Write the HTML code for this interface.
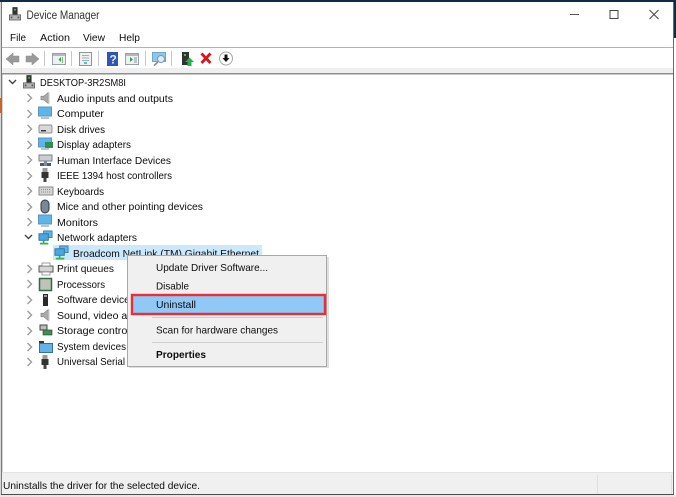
<!DOCTYPE html>
<html><head><meta charset="utf-8"><style>
html,body{margin:0;padding:0;background:#fff;width:676px;height:497px;overflow:hidden}
svg{display:block;position:absolute;left:0;top:0;filter:blur(.3px)}
text{font-family:"Liberation Sans",sans-serif;font-size:10.5px;fill:#0c0c0c}
</style></head><body>
<svg width="676" height="497" viewBox="0 0 676 497" xmlns="http://www.w3.org/2000/svg">
<defs>
<symbol id="chev" viewBox="0 0 8 10" overflow="visible"><path d="M1.500 1l4 4-4 4" fill="none" stroke="#a0a0a0" stroke-width="1.500"/></symbol>
<symbol id="mon" viewBox="0 0 14 14" overflow="visible"><rect x="0.5" y="1" width="13" height="9" fill="#5fb4e8" stroke="#5a94bf"/><rect x="3" y="11" width="8" height="2" fill="#b9c4cc"/></symbol>
<symbol id="net" viewBox="0 0 16 16" overflow="visible"><rect x="6" y="1" width="9" height="7" fill="#5fb4e8" stroke="#3f7fae"/><rect x="1" y="4" width="10" height="7" fill="#4ba6e2" stroke="#2f77a8"/><path d="M6 11v3M2 14.500h9" stroke="#36b24a" stroke-width="1.800"/></symbol>
<symbol id="usb" viewBox="0 0 12 14" overflow="visible"><rect x="3.500" y="0" width="5" height="4" fill="#999"/><rect x="2.500" y="4" width="7" height="6" fill="#333"/><rect x="4.500" y="10" width="3" height="4" fill="#444"/></symbol>
<symbol id="spk" viewBox="0 0 12 14" overflow="visible"><path d="M1 5h3l5-4v12l-5-4H1z" fill="#a9a9a9" stroke="#808080" stroke-width=".6"/><path d="M9 1v12h1.500V1z" fill="#d0d0d0"/></symbol>
<symbol id="host" viewBox="0 0 14 16" overflow="visible"><rect x="4" y="0" width="6" height="9" fill="#333"/><rect x="6" y="2" width="2" height="2" fill="#2ecc55"/><rect x="0.500" y="9" width="13" height="6" fill="#b5b5b5" stroke="#666"/><rect x="2" y="11" width="2" height="2" fill="#555"/><rect x="10" y="11" width="2" height="2" fill="#555"/></symbol>
</defs>

<!-- outer background -->
<rect width="676" height="497" fill="#fff"/>
<rect width="676" height="2" fill="#0f2b48"/>
<rect x="674" y="0" width="2" height="38" fill="#0f2b48"/>
<rect x="0" y="2" width="1" height="495" fill="#d8d8d8"/>
<rect x="0" y="98" width="1" height="15" fill="#c8642c"/>
<rect x="0" y="495" width="676" height="2" fill="#e8e8e8"/>
<rect x="1" y="2" width="1" height="493" fill="#7a7a7a"/>
<rect x="2" y="2" width="671" height="492" fill="#fff"/>
<rect x="673" y="2" width="1" height="493" fill="#6a6a6a"/>
<rect x="1" y="494" width="673" height="1" fill="#4d4d4d"/>

<!-- title bar -->
<use href="#host" x="9" y="7" width="12" height="14"/>
<text x="26.500" y="19" style="font-size:11.500px;fill:#333" textLength="73" lengthAdjust="spacingAndGlyphs">Device Manager</text>
<rect x="570" y="14" width="9" height="1" fill="#555"/>
<rect x="610" y="10.500" width="8" height="8" fill="none" stroke="#444"/>
<path d="M649.500 10l9 9M658.500 10l-9 9" stroke="#444" stroke-width="1" fill="none"/>

<!-- menu bar -->
<text x="10" y="41" textLength="16" lengthAdjust="spacingAndGlyphs">File</text>
<text x="40" y="41" textLength="30" lengthAdjust="spacingAndGlyphs">Action</text>
<text x="83" y="41" textLength="22" lengthAdjust="spacingAndGlyphs">View</text>
<text x="119" y="41" textLength="21" lengthAdjust="spacingAndGlyphs">Help</text>
<rect x="2" y="47" width="671" height="1" fill="#b0b3ba"/>

<!-- toolbar -->
<path d="M6 59l7-6v3h6v6h-6v3z" fill="#9a9a9a" stroke="#8a8a8a" stroke-width=".5"/>
<path d="M39 59l-7-6v3h-6v6h6v3z" fill="#9a9a9a" stroke="#8a8a8a" stroke-width=".5"/>
<rect x="44" y="51" width="1" height="15" fill="#c8c8c8"/>
<rect x="52.500" y="53.500" width="13" height="11" fill="#eef1f3" stroke="#9aa0a6"/><rect x="53" y="54" width="12" height="2" fill="#b4b8bd"/><path d="M61 57l-2.500 2.500 2.500 2.500z" fill="#33a34c"/><rect x="62" y="57" width="1" height="6" fill="#7dbf8b"/>
<rect x="71" y="51" width="1" height="15" fill="#c8c8c8"/>
<rect x="79.500" y="52.500" width="12" height="13" fill="#eef1f3" stroke="#8f9499"/><path d="M82 55.500h7M82 58h7M82 60.500h7" stroke="#a8acb0" stroke-width="1"/><rect x="84" y="62" width="3" height="2" fill="#5fb4e8"/>
<rect x="98" y="51" width="1" height="15" fill="#c8c8c8"/>
<rect x="107" y="52" width="11" height="14" fill="#2f55b5"/>
<text x="109.500" y="63.500" style="font-size:12px;font-weight:bold;fill:#e8eeff">?</text>
<rect x="125.500" y="53.500" width="13" height="11" fill="#eef1f3" stroke="#9aa0a6"/><rect x="126" y="54" width="12" height="2" fill="#b4b8bd"/><path d="M130 57l3 2.500-3 2.500z" fill="#33a34c"/><rect x="134" y="57" width="3" height="6" fill="#b9c4cc"/>
<rect x="145" y="51" width="1" height="15" fill="#c8c8c8"/>
<rect x="152.500" y="52.500" width="13" height="9" fill="#8cc8ee" stroke="#6fa7cc"/><circle cx="161" cy="59" r="3.500" fill="#dbeefa" stroke="#7a9ab0"/><path d="M158 62l-4 3.500" stroke="#8b8b8b" stroke-width="1.500"/>
<rect x="171" y="51" width="1" height="15" fill="#c8c8c8"/>
<rect x="182" y="52" width="7" height="13" fill="#333"/><rect x="184" y="54" width="2" height="2" fill="#2ecc55"/><path d="M189.500 57.500l4.500 4.500h-2.500v4h-4v-4H185z" fill="#22b14c"/>
<path d="M201.500 53.500l9 9.500M210.500 53.500l-9 9.500" stroke="#d9141c" stroke-width="2.800" fill="none"/>
<circle cx="226" cy="58.500" r="6.500" fill="#fff" stroke="#a8a8a8"/><path d="M224.500 54.500h3v3.500h2l-3.500 4-3.500-4h2z" fill="#111"/>

<!-- band -->
<rect x="2" y="68" width="671" height="5" fill="#efefef"/>
<rect x="2" y="73" width="671" height="1.500" fill="#8f8f8f"/>
<rect x="2" y="74.500" width="1" height="398" fill="#d4d4d4"/>

<!-- tree -->
<path d="M9 80l3.500 3.500L16 80" fill="none" stroke="#444" stroke-width="1.400"/>
<use href="#host" x="23" y="75" width="12" height="14"/>
<text x="40" y="86" textLength="86" lengthAdjust="spacingAndGlyphs">DESKTOP-3R2SM8I</text>

<use href="#chev" x="26" y="93" width="8" height="10"/><use href="#spk" x="40" y="91" width="11" height="14"/>
<text x="57" y="102" textLength="116" lengthAdjust="spacingAndGlyphs">Audio inputs and outputs</text>

<use href="#chev" x="26" y="109" width="8" height="10"/><use href="#mon" x="38" y="106" width="14" height="14"/>
<text x="57" y="117" textLength="47" lengthAdjust="spacingAndGlyphs">Computer</text>

<use href="#chev" x="26" y="124" width="8" height="10"/><rect x="39" y="125" width="13" height="8" rx="1.500" fill="#d8d8d8" stroke="#8f8f8f"/><rect x="41" y="130" width="5" height="1.500" fill="#3a3a3a"/>
<text x="57" y="133" textLength="48" lengthAdjust="spacingAndGlyphs">Disk drives</text>

<use href="#chev" x="26" y="140" width="8" height="10"/><use href="#mon" x="38" y="137" width="14" height="14"/><rect x="45" y="142" width="8" height="6" fill="#2f8f4f"/>
<text x="57" y="148" textLength="74" lengthAdjust="spacingAndGlyphs">Display adapters</text>

<use href="#chev" x="26" y="155" width="8" height="10"/><rect x="39" y="155" width="13" height="6" fill="#c9ced3" stroke="#7d8288"/><path d="M40 166v-3h4v3zM47 166v-3h4v3z" fill="#4d5a66"/><rect x="44" y="161" width="3" height="5" fill="#7a8ea0"/>
<text x="57" y="164" textLength="114" lengthAdjust="spacingAndGlyphs">Human Interface Devices</text>

<use href="#chev" x="26" y="171" width="8" height="10"/><use href="#usb" x="39" y="168" width="12" height="14"/>
<text x="57" y="179" textLength="115" lengthAdjust="spacingAndGlyphs">IEEE 1394 host controllers</text>

<use href="#chev" x="26" y="186" width="8" height="10"/><rect x="39" y="187" width="14" height="8" fill="#d4d4d4" stroke="#8b8b8b"/><path d="M41 189.500h10M41 192h10" stroke="#8f8f8f" stroke-dasharray="1 1"/>
<text x="57" y="195" textLength="47" lengthAdjust="spacingAndGlyphs">Keyboards</text>

<use href="#chev" x="26" y="202" width="8" height="10"/><rect x="41" y="200" width="8" height="13" rx="4" fill="#7a8794" stroke="#2f3a44"/>
<text x="57" y="210" textLength="146" lengthAdjust="spacingAndGlyphs">Mice and other pointing devices</text>

<use href="#chev" x="26" y="217" width="8" height="10"/><use href="#mon" x="38" y="214" width="14" height="14"/>
<text x="57" y="226" textLength="41" lengthAdjust="spacingAndGlyphs">Monitors</text>

<path d="M25 235l3.500 3.500L32 235" fill="none" stroke="#444" stroke-width="1.400"/><use href="#net" x="38" y="230" width="15" height="15"/>
<text x="57" y="241" textLength="80" lengthAdjust="spacingAndGlyphs">Network adapters</text>

<rect x="53" y="245" width="209" height="15" fill="#cce8fb"/>
<use href="#net" x="54" y="245" width="15" height="15"/>
<text x="73" y="257" textLength="186" lengthAdjust="spacingAndGlyphs">Broadcom NetLink (TM) Gigabit Ethernet</text>

<use href="#chev" x="26" y="264" width="8" height="10"/><rect x="39" y="266" width="14" height="6" fill="#d5d5d5" stroke="#555"/><rect x="42" y="263" width="8" height="3" fill="#fff" stroke="#777" stroke-width=".7"/><rect x="42" y="272" width="8" height="3" fill="#fff" stroke="#777" stroke-width=".7"/>
<text x="57" y="272" textLength="57" lengthAdjust="spacingAndGlyphs">Print queues</text>

<use href="#chev" x="26" y="279" width="8" height="10"/><rect x="39.500" y="278.500" width="12" height="12" fill="#c0c4b8" stroke="#2f6a45" stroke-width="1.500"/>
<text x="57" y="288" textLength="48" lengthAdjust="spacingAndGlyphs">Processors</text>

<use href="#chev" x="26" y="295" width="8" height="10"/><rect x="43" y="294" width="5" height="12" fill="#2a2a2a"/><rect x="44" y="295" width="3" height="2" fill="#999"/>
<text x="57" y="303" textLength="78" lengthAdjust="spacingAndGlyphs">Software devices</text>

<use href="#chev" x="26" y="310" width="8" height="10"/><use href="#spk" x="40" y="308" width="11" height="14"/>
<text x="57" y="319" textLength="82" lengthAdjust="spacingAndGlyphs">Sound, video and</text>

<use href="#chev" x="26" y="326" width="8" height="10"/><rect x="40" y="325" width="7" height="5" fill="#bbb" stroke="#444"/><rect x="43" y="330" width="9" height="5" fill="#3c9150" stroke="#333" stroke-width=".6"/>
<text x="57" y="334" textLength="90" lengthAdjust="spacingAndGlyphs">Storage controllers</text>

<use href="#chev" x="26" y="342" width="8" height="10"/><rect x="39" y="341" width="5" height="3" fill="#333"/><rect x="39.500" y="343.500" width="13" height="9" fill="#5fb4e8" stroke="#3b6f95"/>
<text x="57" y="350" textLength="69" lengthAdjust="spacingAndGlyphs">System devices</text>

<use href="#chev" x="26" y="357" width="8" height="10"/><use href="#usb" x="39" y="355" width="12" height="14"/>
<text x="57" y="365" textLength="68" lengthAdjust="spacingAndGlyphs">Universal Serial</text>

<!-- context menu -->
<rect x="129" y="257" width="200" height="111" fill="#000" opacity=".12"/>
<rect x="127.500" y="255.500" width="199" height="111" fill="#f0f0f0" stroke="#a8a8a8"/>
<text x="156" y="271" textLength="112" lengthAdjust="spacingAndGlyphs">Update Driver Software...</text>
<text x="156" y="289.500" textLength="33" lengthAdjust="spacingAndGlyphs">Disable</text>
<rect x="133" y="296" width="191" height="17" fill="#90c8f6"/>
<rect x="132" y="295" width="193" height="19" fill="none" stroke="#ee2c34" stroke-width="2.400"/>
<text x="156" y="308" textLength="40" lengthAdjust="spacingAndGlyphs">Uninstall</text>
<rect x="152" y="317" width="171" height="1" fill="#d0d0d0"/>
<text x="156" y="333.500" textLength="122" lengthAdjust="spacingAndGlyphs">Scan for hardware changes</text>
<rect x="152" y="342" width="171" height="1" fill="#d0d0d0"/>
<text x="156" y="358" style="font-weight:bold" textLength="50" lengthAdjust="spacingAndGlyphs">Properties</text>

<!-- status bar -->
<rect x="2" y="472" width="671" height="1" fill="#e3e3e3"/>
<rect x="2" y="473" width="671" height="21" fill="#f0f0f0"/>
<rect x="597" y="475" width="1" height="19" fill="#dfdfdf"/>
<rect x="671" y="475" width="1" height="19" fill="#dfdfdf"/>
<text x="3" y="489" textLength="197" lengthAdjust="spacingAndGlyphs">Uninstalls the driver for the selected device.</text>
</svg>
</body></html>
